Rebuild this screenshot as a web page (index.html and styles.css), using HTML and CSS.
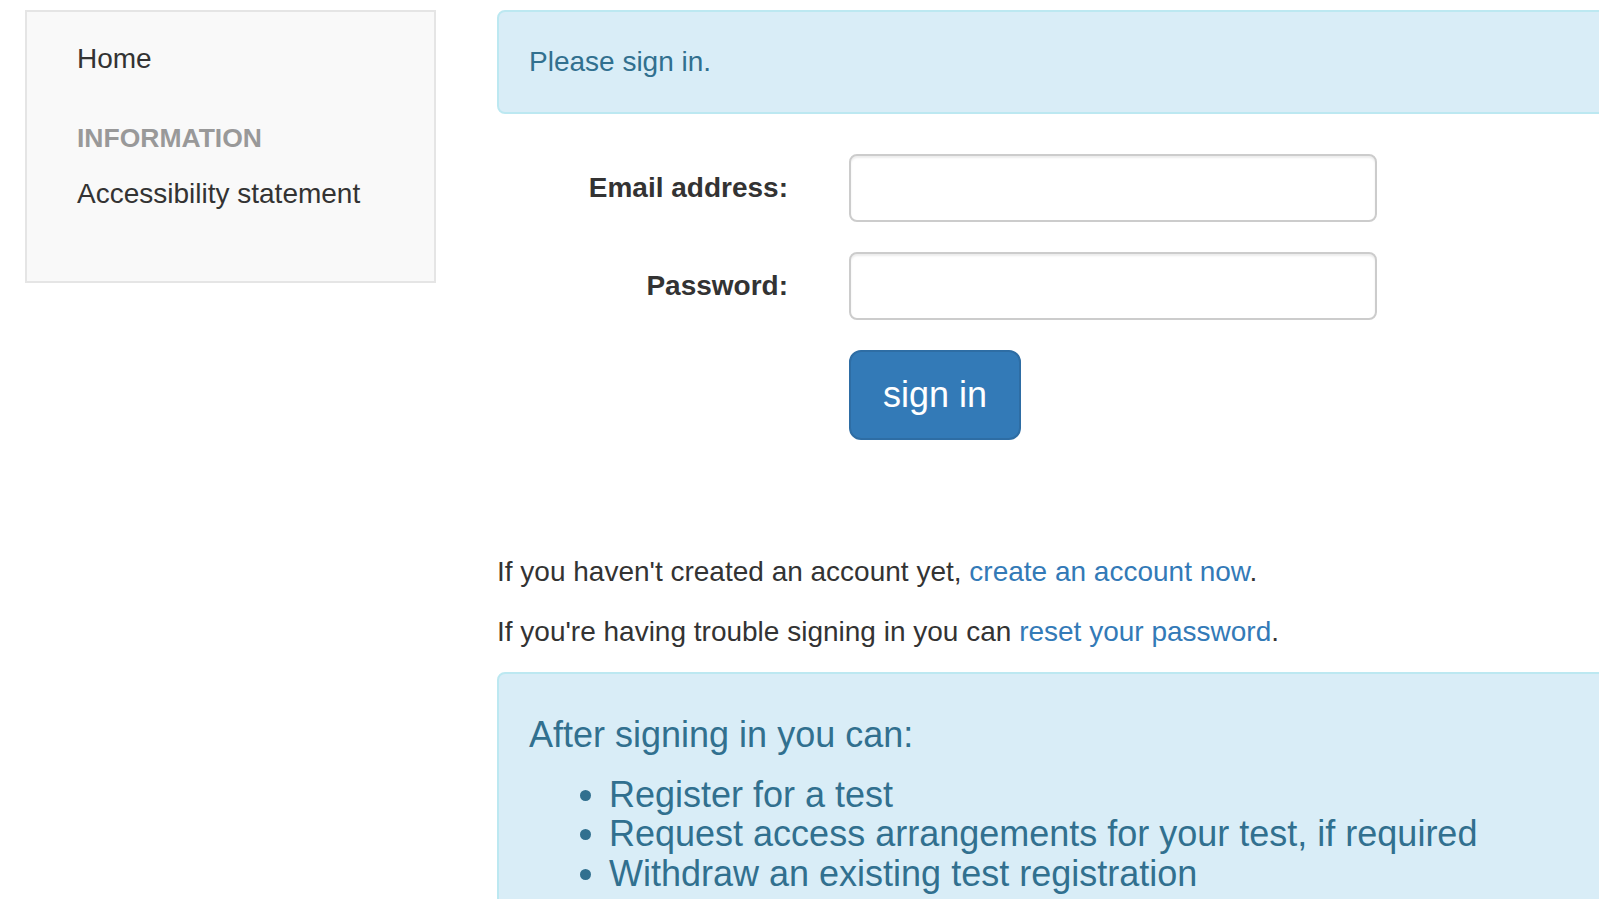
FILE: index.html
```html
<html>
<head>
<title>Sign in</title>
<link rel="stylesheet" href="styles.css">
</head>
<body>

<div class="page">
  <div class="sidebar">
    <ul class="nav-list">
      <li><a href="#">Home</a></li>
      <li class="nav-header">INFORMATION</li>
      <li class="last"><a href="#">Accessibility statement</a></li>
    </ul>
  </div>

  <div class="main">
    <div class="alert">Please sign in.</div>

    <form class="signin-form" onsubmit="return false">
      <div class="form-group">
        <label for="email">Email address:</label>
        <input type="text" id="email" />
      </div>
      <div class="form-group">
        <label for="password">Password:</label>
        <input type="password" id="password" />
      </div>
      <div class="form-group">
        <span></span>
        <div><button class="btn-primary">sign in</button></div>
      </div>
    </form>

    <p class="help">If you haven't created an account yet, <a href="#">create an account now</a>.</p>
    <p class="help">If you're having trouble signing in you can <a href="#">reset your password</a>.</p>

    <div class="alert">
      <h4>After signing in you can:</h4>
      <ul class="after-list">
        <li>Register for a test</li>
        <li>Request access arrangements for your test, if required</li>
        <li>Withdraw an existing test registration</li>
      </ul>
    </div>
  </div>
</div>

</body>
</html>
```

FILE: styles.css
```css
body {
  font-family: "Liberation Sans", Arial, sans-serif;
  font-size: 28px;
  line-height: 40px;
  color: #333;
  background: #fff;
  margin: 0;
  overflow: hidden;
}

a {
  color: #337ab7;
  text-decoration: none;
}

.page {
  display: flex;
  align-items: flex-start;
  gap: 61px;
  padding: 10px 0 0 25px;
}

.sidebar {
  width: 411px;
  flex-shrink: 0;
  box-sizing: border-box;
  background: #f9f9f9;
  border: 2px solid #e5e5e5;
  padding: 27px 0 67px 50px;
}

.nav-list {
  list-style: none;
  margin: 0;
  padding: 0;
}

.nav-list a {
  color: #333;
}

.nav-header {
  font-size: 26.5px;
  font-weight: bold;
  color: #999;
  margin: 39px 0 16px;
}

.main {
  width: 1300px;
  flex-shrink: 0;
}

.alert {
  background: #d9edf7;
  border: 2px solid #bce8f1;
  border-radius: 8px;
  color: #31708f;
  padding: 30px;
  margin-bottom: 40px;
}

.signin-form {
  margin: 0 0 112px;
}

.form-group {
  display: grid;
  grid-template-columns: 291px 528px;
  column-gap: 61px;
  align-items: center;
  margin-bottom: 30px;
}

.form-group label {
  font-weight: bold;
  text-align: right;
}

.form-group input {
  height: 68px;
  box-sizing: border-box;
  border: 2px solid #ccc;
  border-radius: 8px;
  box-shadow: inset 0 2px 2px rgba(0,0,0,.075);
  font: inherit;
  padding: 12px 24px;
  background: #fff;
}

.btn-primary {
  font-family: inherit;
  font-size: 36px;
  line-height: 48px;
  padding: 19px 32px;
  color: #fff;
  background: #337ab7;
  border: 2px solid #2e6da4;
  border-radius: 12px;
}

.help {
  margin: 0 0 20px;
}

.alert h4 {
  font-size: 36px;
  font-weight: normal;
  line-height: 1.1;
  margin: 11px 0 20px;
}

.after-list {
  font-size: 36px;
  line-height: 1.1;
  margin: 0 0 20px;
  padding-left: 80px;
}
```
